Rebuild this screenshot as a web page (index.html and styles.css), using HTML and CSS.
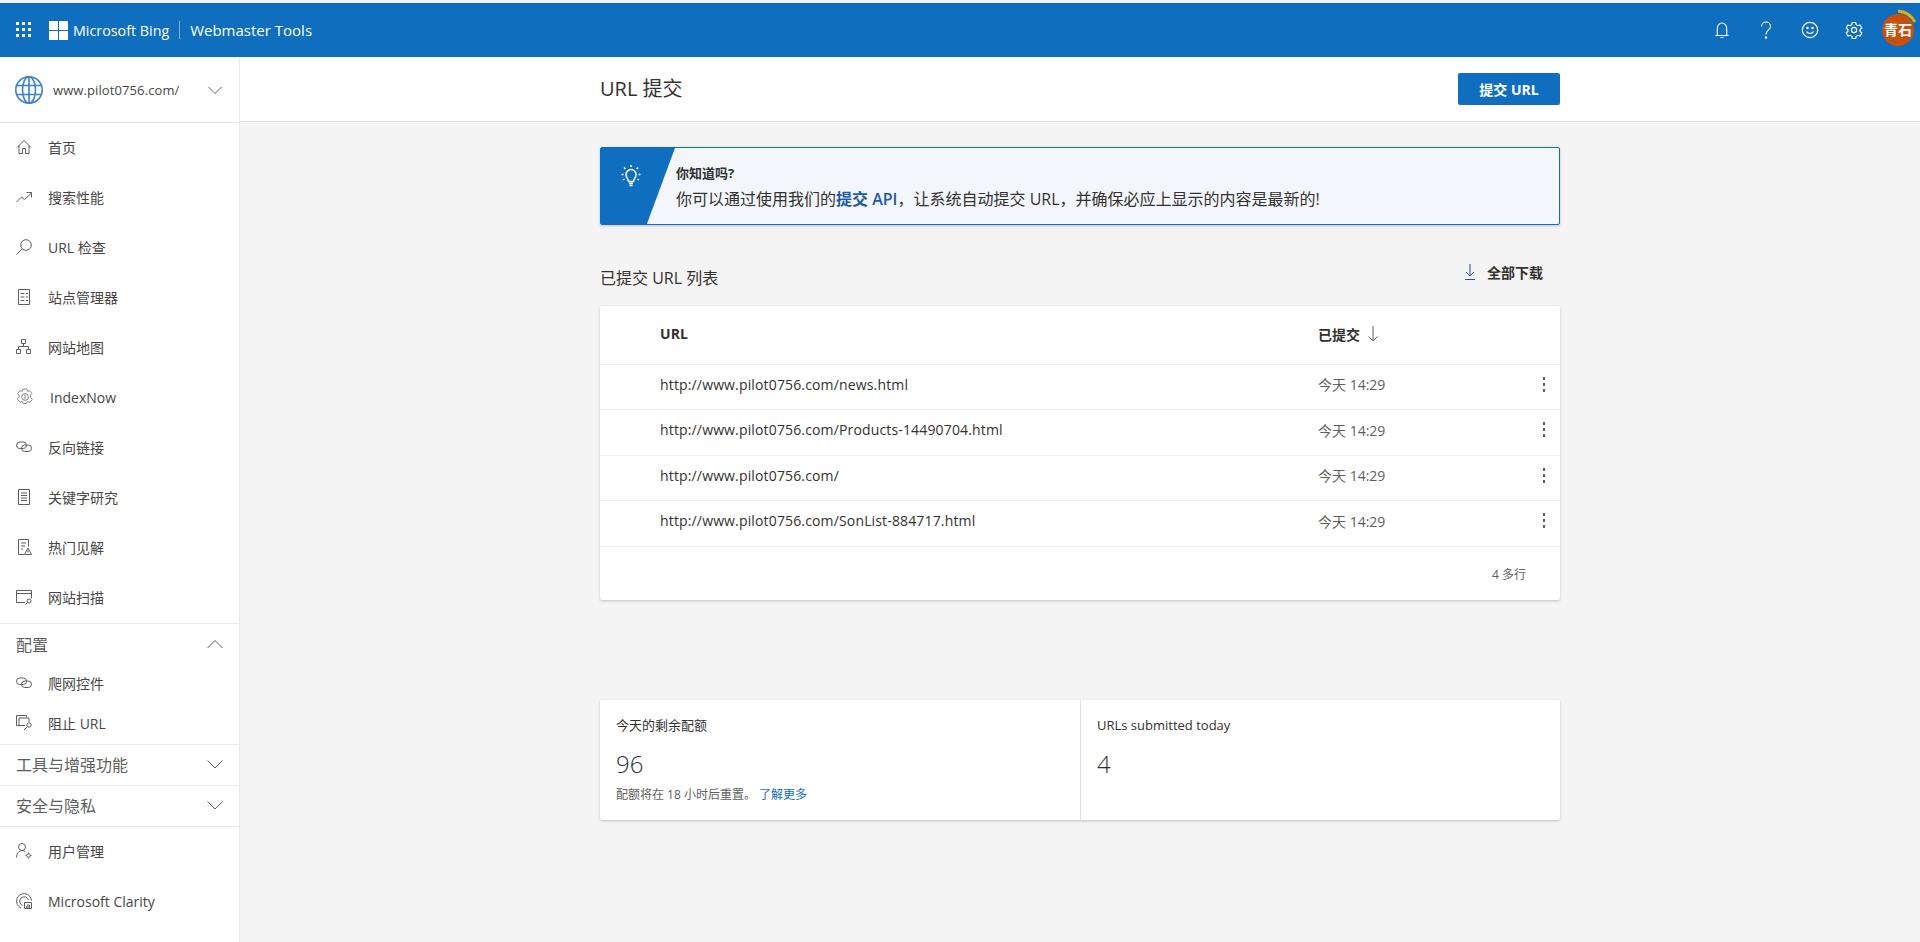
FILE: index.html
```html
<!DOCTYPE html>
<html lang="zh-CN">
<head>
    <meta charset="UTF-8">
    <title>Bing Webmaster Tools</title>
    <link rel="stylesheet" href="styles.css">
</head>
<body>
    <header class="topbar">
        <svg class="waffle" width="16" height="16" viewBox="0 0 16 16" fill="#fff">
            <rect x="0" y="0" width="3" height="3"/><rect x="6" y="0" width="3" height="3"/><rect x="12" y="0" width="3" height="3"/>
            <rect x="0" y="6" width="3" height="3"/><rect x="6" y="6" width="3" height="3"/><rect x="12" y="6" width="3" height="3"/>
            <rect x="0" y="12" width="3" height="3"/><rect x="6" y="12" width="3" height="3"/><rect x="12" y="12" width="3" height="3"/>
        </svg>
        <svg class="ms-logo" width="19" height="19" viewBox="0 0 19 19" fill="#fff">
            <rect width="9" height="9"/><rect x="10" width="9" height="9"/><rect y="10" width="9" height="9"/><rect x="10" y="10" width="9" height="9"/>
        </svg>
        <span class="brand brand-ms">Microsoft Bing</span>
        <span class="brand-sep"></span>
        <span class="brand">Webmaster Tools</span>
        <div class="top-actions">
            <svg class="top-icon" width="20" height="20" viewBox="0 0 20 20" fill="none" stroke="#fff" stroke-width="1.1"><path d="M3.500 15.500h13M5.300 15.500V8.500a4.700 5.500 0 0 1 9.400 0v7M8.500 17.500h3"/></svg>
            <svg class="top-icon" width="20" height="20" viewBox="0 0 20 20" fill="none" stroke="#fff" stroke-width="1.1"><path d="M5.500 6.500a4.500 4.500 0 0 1 9 0c0 3.500-4.500 3.500-4.500 8"/><circle cx="10" cy="17.500" r=".7" fill="#fff"/></svg>
            <svg class="top-icon" width="20" height="20" viewBox="0 0 20 20" fill="none" stroke="#fff" stroke-width="1.200"><circle cx="10" cy="10" r="7.700"/><path d="M6.500 11.500c1 2.600 6 2.600 7 0"/><circle cx="7.500" cy="8" r=".6" fill="#fff"/><circle cx="12.500" cy="8" r=".6" fill="#fff"/></svg>
            <svg class="top-icon" width="20" height="20" viewBox="0 0 20 20" fill="none" stroke="#fff" stroke-width="1.200"><path d="M8.300 2.500h3.400l.5 2.200 1.700 1 2.200-.7 1.700 3-1.700 1.500v2l1.700 1.500-1.700 3-2.200-.7-1.700 1-.5 2.200H8.300l-.5-2.200-1.700-1-2.200.7-1.700-3 1.700-1.500v-2L2.200 8l1.700-3 2.200.7 1.700-1z"/><circle cx="10" cy="10" r="2.600"/></svg>
            <div class="avatar">
                青石
                <svg class="avatar-arc" width="22" height="16" viewBox="0 0 22 16" fill="none"><path d="M2 2c7 .5 13 4 17 11" stroke="#f0ab00" stroke-width="3"/></svg>
            </div>
        </div>
    </header>

    <div class="layout">
        <aside class="sidebar">
            <div class="site-picker">
                <svg width="30" height="30" viewBox="0 0 30 30" fill="none" stroke="#3b83c8" stroke-width="1.600"><circle cx="15" cy="15" r="13.200"/><ellipse cx="15" cy="15" rx="6.500" ry="13.200"/><path d="M15 2v26M2.500 10.500h25M2.500 19.500h25"/></svg>
                <span class="site-name">www.pilot0756.com/</span>
                <svg class="chevron" width="16" height="16" viewBox="0 0 16 16" fill="none" stroke="#605e5c"><path d="M1.500 5l6.500 6.500L14.500 5"/></svg>
            </div>

            <a class="nav-item">
                <svg class="nav-icon" width="16" height="16" viewBox="0 0 16 16" fill="none" stroke="#605e5c"><path d="M1 8.500L8 1.500l7 7M3 6.500v8h3.500v-5h3v5H13v-8"/></svg>
                <span>首页</span>
            </a>
            <a class="nav-item">
                <svg class="nav-icon" width="16" height="16" viewBox="0 0 16 16" fill="none" stroke="#605e5c"><path d="M.5 13l5-5 3 2.500L15.500 4M10.500 3.500h5v5"/></svg>
                <span>搜索性能</span>
            </a>
            <a class="nav-item">
                <svg class="nav-icon" width="16" height="16" viewBox="0 0 16 16" fill="none" stroke="#605e5c"><circle cx="10" cy="6" r="5.300"/><path d="M6 10L.5 15.500"/></svg>
                <span>URL 检查</span>
            </a>
            <a class="nav-item">
                <svg class="nav-icon" width="16" height="16" viewBox="0 0 16 16" fill="none" stroke="#605e5c"><path d="M2.500.500h11v15h-11zM4.500 4.500h4M10 4.500h2M4.500 8h4M10 8h2M4.500 11.500h4M10 11.500h2"/></svg>
                <span>站点管理器</span>
            </a>
            <a class="nav-item">
                <svg class="nav-icon" width="16" height="16" viewBox="0 0 16 16" fill="none" stroke="#605e5c"><path d="M5.500.500h4v4h-4zM.500 10.500h4v4h-4zM10.500 10.500h4v4h-4zM7.500 4.500v3M2.500 10.500v-3h10v3"/></svg>
                <span>网站地图</span>
            </a>
            <a class="nav-item nav-item-gear">
                <svg class="nav-icon" width="18" height="18" viewBox="0 0 18 18" fill="none" stroke="#8a8886"><path d="M7 1h4l.5 2.300 2-.6 2.300 2.800-1.300 1.800.1 2.200 1.700 1.800-2.300 3-2.300-.6-1.300 1.800H7l-.6-2-2.400.7-2.500-3 1.500-1.900V7.200L1.500 5.500 4 2.700l2.300.6z"/><circle cx="9" cy="9" r="3.400"/><path d="M9 6.500v5"/></svg>
                <span>IndexNow</span>
            </a>
            <a class="nav-item">
                <svg class="nav-icon" width="16" height="16" viewBox="0 0 16 16" fill="none" stroke="#605e5c"><rect x=".5" y="3" width="10" height="6.500" rx="3.250"/><rect x="5.500" y="6" width="10" height="6.500" rx="3.250"/></svg>
                <span>反向链接</span>
            </a>
            <a class="nav-item">
                <svg class="nav-icon" width="16" height="16" viewBox="0 0 16 16" fill="none" stroke="#605e5c"><path d="M2.500.500h11v15h-11zM5 4h6M5 6.500h6M5 9h6M5 11.500h6"/></svg>
                <span>关键字研究</span>
            </a>
            <a class="nav-item">
                <svg class="nav-icon" width="16" height="16" viewBox="0 0 16 16" fill="none" stroke="#605e5c"><path d="M8 15.500H2.500V.500h10v7M5 4h5M5 7h4M5 10h2M12 9l-3.500 6.500h7zM12 11.500v2"/></svg>
                <span>热门见解</span>
            </a>
            <a class="nav-item">
                <svg class="nav-icon" width="16" height="16" viewBox="0 0 16 16" fill="none" stroke="#605e5c"><path d="M9 13.500H.5v-12h15v8M.5 4.500h15"/><circle cx="13" cy="12" r="2"/><path d="M11.500 13.500l-2 2"/></svg>
                <span>网站扫描</span>
            </a>

            <div class="nav-section">
                <div class="section-label section-label-open">
                    <span>配置</span>
                    <svg class="chevron" width="16" height="16" viewBox="0 0 16 16" fill="none" stroke="#605e5c"><path d="M.5 12L8 4.500 15.500 12"/></svg>
                </div>
                <a class="nav-item nav-sub">
                    <svg class="nav-icon" width="16" height="16" viewBox="0 0 16 16" fill="none" stroke="#605e5c"><rect x=".5" y="3" width="10" height="6.500" rx="3.250"/><rect x="5.500" y="6" width="10" height="6.500" rx="3.250"/></svg>
                    <span>爬网控件</span>
                </a>
                <a class="nav-item nav-sub">
                    <svg class="nav-icon" width="16" height="16" viewBox="0 0 16 16" fill="none" stroke="#605e5c"><path d="M3 10.500H.5v-10h10v2M3 3h10v4M3 3v7.500h6"/><circle cx="13" cy="10" r="2.200"/><path d="M11.500 11.500l-3.500 3.500"/></svg>
                    <span>阻止 URL</span>
                </a>
            </div>
            <div class="nav-section">
                <div class="section-label">
                    <span>工具与增强功能</span>
                    <svg class="chevron" width="16" height="16" viewBox="0 0 16 16" fill="none" stroke="#605e5c"><path d="M.5 4.500L8 12l7.500-7.500"/></svg>
                </div>
            </div>
            <div class="nav-section">
                <div class="section-label">
                    <span>安全与隐私</span>
                    <svg class="chevron" width="16" height="16" viewBox="0 0 16 16" fill="none" stroke="#605e5c"><path d="M.5 4.500L8 12l7.500-7.500"/></svg>
                </div>
            </div>
            <div class="nav-section">
                <a class="nav-item">
                    <svg class="nav-icon" width="16" height="16" viewBox="0 0 16 16" fill="none" stroke="#605e5c"><circle cx="6" cy="4" r="3.500"/><path d="M.5 14.500c0-4 2.500-7 5.500-7 1.200 0 2.200.4 3 1"/><circle cx="12.500" cy="12.500" r="1.800"/><path d="M12.500 9.500v1.200M12.500 14.300v1.200M9.500 12.500h1.200M14.300 12.500h1.200"/></svg>
                    <span>用户管理</span>
                </a>
                <a class="nav-item">
                    <svg class="nav-icon" width="16" height="16" viewBox="0 0 16 16" fill="none" stroke="#605e5c"><path d="M5 15A7.500 7.500 0 1 1 15.500 7.500"/><path d="M6.500 12.500A4.500 4.500 0 1 1 12.500 7"/><path d="M8.500 15.500v-6h7v6zM10.500 15v-2M12 15v-4M13.500 15v-3"/></svg>
                    <span>Microsoft Clarity</span>
                </a>
            </div>
        </aside>

        <main class="main">
            <div class="page-head">
                <div class="page-head-inner">
                    <h1 class="page-title">URL 提交</h1>
                    <button class="primary-btn">提交 URL</button>
                </div>
            </div>

            <div class="content">
                <div class="tip">
                    <div class="tip-flag">
                        <svg width="20" height="22" viewBox="0 0 20 22" fill="none" stroke="#fff" stroke-width="1.500"><path d="M7.500 16.500c0-3-2.500-3.500-2.500-7a5 5 0 0 1 10 0c0 3.500-2.500 4-2.500 7zM8 18.500h4M8.500 20.500h3"/><path d="M10 0v2M3 2.500l1.400 1.400M17 2.500l-1.400 1.400M.5 9.500h2M17.500 9.500h2M2 15l1.500-1M18 15l-1.500-1"/></svg>
                    </div>
                    <div class="tip-body">
                        <div class="tip-title">你知道吗?</div>
                        <div class="tip-text">你可以通过使用我们的<a class="tip-link">提交 API</a>，让系统自动提交 URL，并确保必应上显示的内容是最新的!</div>
                    </div>
                </div>

                <div class="list-head">
                    <h2 class="list-title">已提交 URL 列表</h2>
                    <a class="download">
                        <svg width="10" height="18" viewBox="0 0 10 18" fill="none" stroke="#2b4f9e"><path d="M5 1v12M1 9l4 4 4-4M0 16.500h10"/></svg>
                        全部下载
                    </a>
                </div>

                <div class="card url-card">
                    <div class="url-row url-row-head">
                        <span class="col-url">URL</span>
                        <span class="col-date">已提交
                            <svg width="12" height="18" viewBox="0 0 12 18" fill="none" stroke="#605e5c"><path d="M6 1v15M1.500 11.500L6 16l4.500-4.500"/></svg>
                        </span>
                    </div>
                    <div class="url-row">
                        <span class="col-url">http://www.pilot0756.com/news.html</span>
                        <span class="col-date">今天 14:29</span>
                        <span class="col-more"><i></i><i></i><i></i></span>
                    </div>
                    <div class="url-row">
                        <span class="col-url">http://www.pilot0756.com/Products-14490704.html</span>
                        <span class="col-date">今天 14:29</span>
                        <span class="col-more"><i></i><i></i><i></i></span>
                    </div>
                    <div class="url-row">
                        <span class="col-url">http://www.pilot0756.com/</span>
                        <span class="col-date">今天 14:29</span>
                        <span class="col-more"><i></i><i></i><i></i></span>
                    </div>
                    <div class="url-row">
                        <span class="col-url">http://www.pilot0756.com/SonList-884717.html</span>
                        <span class="col-date">今天 14:29</span>
                        <span class="col-more"><i></i><i></i><i></i></span>
                    </div>
                    <div class="url-foot">4 多行</div>
                </div>

                <div class="card stats">
                    <div class="stat">
                        <div class="stat-label">今天的剩余配额</div>
                        <div class="stat-value">96</div>
                        <div class="stat-note">配额将在 18 小时后重置。 <a class="stat-link">了解更多</a></div>
                    </div>
                    <div class="stat stat-right">
                        <div class="stat-label">URLs submitted today</div>
                        <div class="stat-value">4</div>
                    </div>
                </div>
            </div>
        </main>
    </div>
</body>
</html>
```

FILE: styles.css
```css
* {
    box-sizing: border-box;
}
html, body {
    height: 100%;
}
body {
    margin: 0;
    padding-top: 3px;
    background-color: #f4f4f4;
    color: #323130;
    font-family: "Open Sans", "Noto Sans CJK SC", sans-serif;
    font-size: 14px;
    overflow: hidden;
}
svg {
    display: block;
    flex: none;
}
.topbar {
    display: flex;
    align-items: center;
    height: 54px;
    padding-left: 16px;
    background-color: #106ebe;
    color: #fff;
}
.ms-logo {
    margin-left: 17px;
    margin-right: 5px;
}
.brand {
    font-size: 15px;
}
.brand-ms {
    font-size: 14.3px;
}
.brand-sep {
    width: 1px;
    height: 18px;
    margin: 0 10px;
    background-color: #7fb2de;
}
.top-actions {
    display: flex;
    align-items: center;
    gap: 24px;
    margin-left: auto;
    padding-right: 6px;
}
.avatar {
    position: relative;
    width: 32px;
    height: 32px;
    margin-left: -6px;
    border-radius: 50%;
    background-color: #c8500c;
    color: #fff;
    font-size: 14px;
    font-weight: 700;
    line-height: 32px;
    text-align: center;
    white-space: nowrap;
}
.avatar-arc {
    position: absolute;
    top: -5px;
    right: -4px;
}
.layout {
    display: flex;
    height: calc(100% - 54px);
}
.sidebar {
    width: 240px;
    flex: none;
    background: #fff;
    border-right: 1px solid #eaeaea;
}
.site-picker {
    display: flex;
    align-items: center;
    height: 66px;
    padding: 0 16px 0 14px;
    border-bottom: 1px solid #e8e8e8;
}
.site-name {
    margin-left: 9px;
    font-size: 13px;
    letter-spacing: 0.1px;
    color: #484644;
}
.chevron {
    margin-left: auto;
}
.nav-item {
    display: flex;
    align-items: center;
    height: 50px;
    padding: 0 0 2px 16px;
    color: #484644;
}
.nav-icon {
    margin-right: 16px;
}
.nav-sub {
    height: 40px;
}
.nav-section {
    border-top: 1px solid #eaeaea;
}
.section-label {
    display: flex;
    align-items: center;
    height: 40px;
    padding: 0 16px 2px;
    font-size: 16px;
    color: #605e5c;
}
.section-label-open {
    padding-bottom: 0;
}
.main {
    flex: 1;
    min-width: 0;
}
.page-head {
    height: 65px;
    background: #fff;
    border-bottom: 1px solid #e1e1e1;
}
.page-head-inner {
    display: flex;
    align-items: center;
    justify-content: space-between;
    width: 960px;
    height: 100%;
    margin: 0 auto;
    padding-bottom: 1px;
}
.page-title {
    margin: 0;
    padding-bottom: 2px;
    font-size: 20px;
    font-weight: 400;
}
.primary-btn {
    width: 102px;
    height: 32px;
    border: none;
    border-radius: 2px;
    background-color: #106ebe;
    color: #fff;
    font-family: inherit;
    font-size: 14px;
    font-weight: 700;
}
.content {
    width: 960px;
    margin: 0 auto;
    padding-top: 25px;
}
.tip {
    display: flex;
    height: 78px;
    border: 1px solid #106ebe;
    border-radius: 2px;
    background-color: #f3f7fc;
    box-shadow: 0 1px 3px rgba(0,0,0,0.2);
}
.tip-flag {
    width: 74px;
    flex: none;
    padding: 17px 0 0 20px;
    background-color: #106ebe;
    clip-path: polygon(0 0, 100% 0, 62% 100%, 0 100%);
}
.tip-body {
    padding: 16px 0 0 1px;
}
.tip-title {
    font-size: 13px;
    font-weight: 700;
    line-height: 18px;
}
.tip-text {
    font-size: 16px;
    line-height: 28px;
    margin-top: 3px;
}
.tip-link {
    color: #1b5ba5;
    font-weight: 600;
}
.list-head {
    display: flex;
    justify-content: space-between;
    align-items: flex-start;
    height: 46px;
    margin-top: 35px;
}
.list-title {
    margin: 6px 0 0;
    font-size: 16px;
    font-weight: 400;
    line-height: 24px;
}
.download {
    display: flex;
    align-items: center;
    gap: 12px;
    height: 24px;
    padding-right: 17px;
    font-size: 14px;
    font-weight: 700;
}
.card {
    background: #fff;
    border-radius: 2px;
    box-shadow: 0 1px 3px rgba(0,0,0,0.2);
}
.url-card {
    height: 294px;
}
.url-row {
    display: flex;
    align-items: center;
    height: 45.5px;
    padding-bottom: 5px;
    border-bottom: 1px solid #eeeeee;
}
.url-row-head {
    height: 58.5px;
    padding-bottom: 2px;
    font-weight: 700;
}
.col-url {
    width: 718px;
    padding-left: 60px;
    letter-spacing: 0.15px;
}
.col-date {
    display: flex;
    align-items: center;
    gap: 7px;
    width: 200px;
    color: #605e5c;
}
.url-row-head .col-url,
.url-row-head .col-date {
    color: #323130;
}
.col-more {
    display: flex;
    flex-direction: column;
    gap: 3px;
    margin-left: 25px;
}
.col-more i {
    width: 2px;
    height: 3px;
    background-color: #605e5c;
}
.url-foot {
    padding: 18px 34px 0 0;
    text-align: right;
    font-size: 12px;
    line-height: 20px;
    color: #605e5c;
}
.stats {
    display: flex;
    height: 120px;
    margin-top: 100px;
}
.stat {
    width: 480px;
    padding: 15px 16px;
}
.stat-right {
    border-left: 1px solid #e1e1e1;
}
.stat-label {
    font-size: 13px;
    line-height: 20px;
}
.stat-value {
    margin-top: 13px;
    font-size: 24px;
    font-weight: 300;
    line-height: 32px;
}
.stat-note {
    margin-top: 7px;
    font-size: 12px;
    line-height: 16px;
    color: #605e5c;
}
.stat-link {
    color: #106ebe;
}
```
